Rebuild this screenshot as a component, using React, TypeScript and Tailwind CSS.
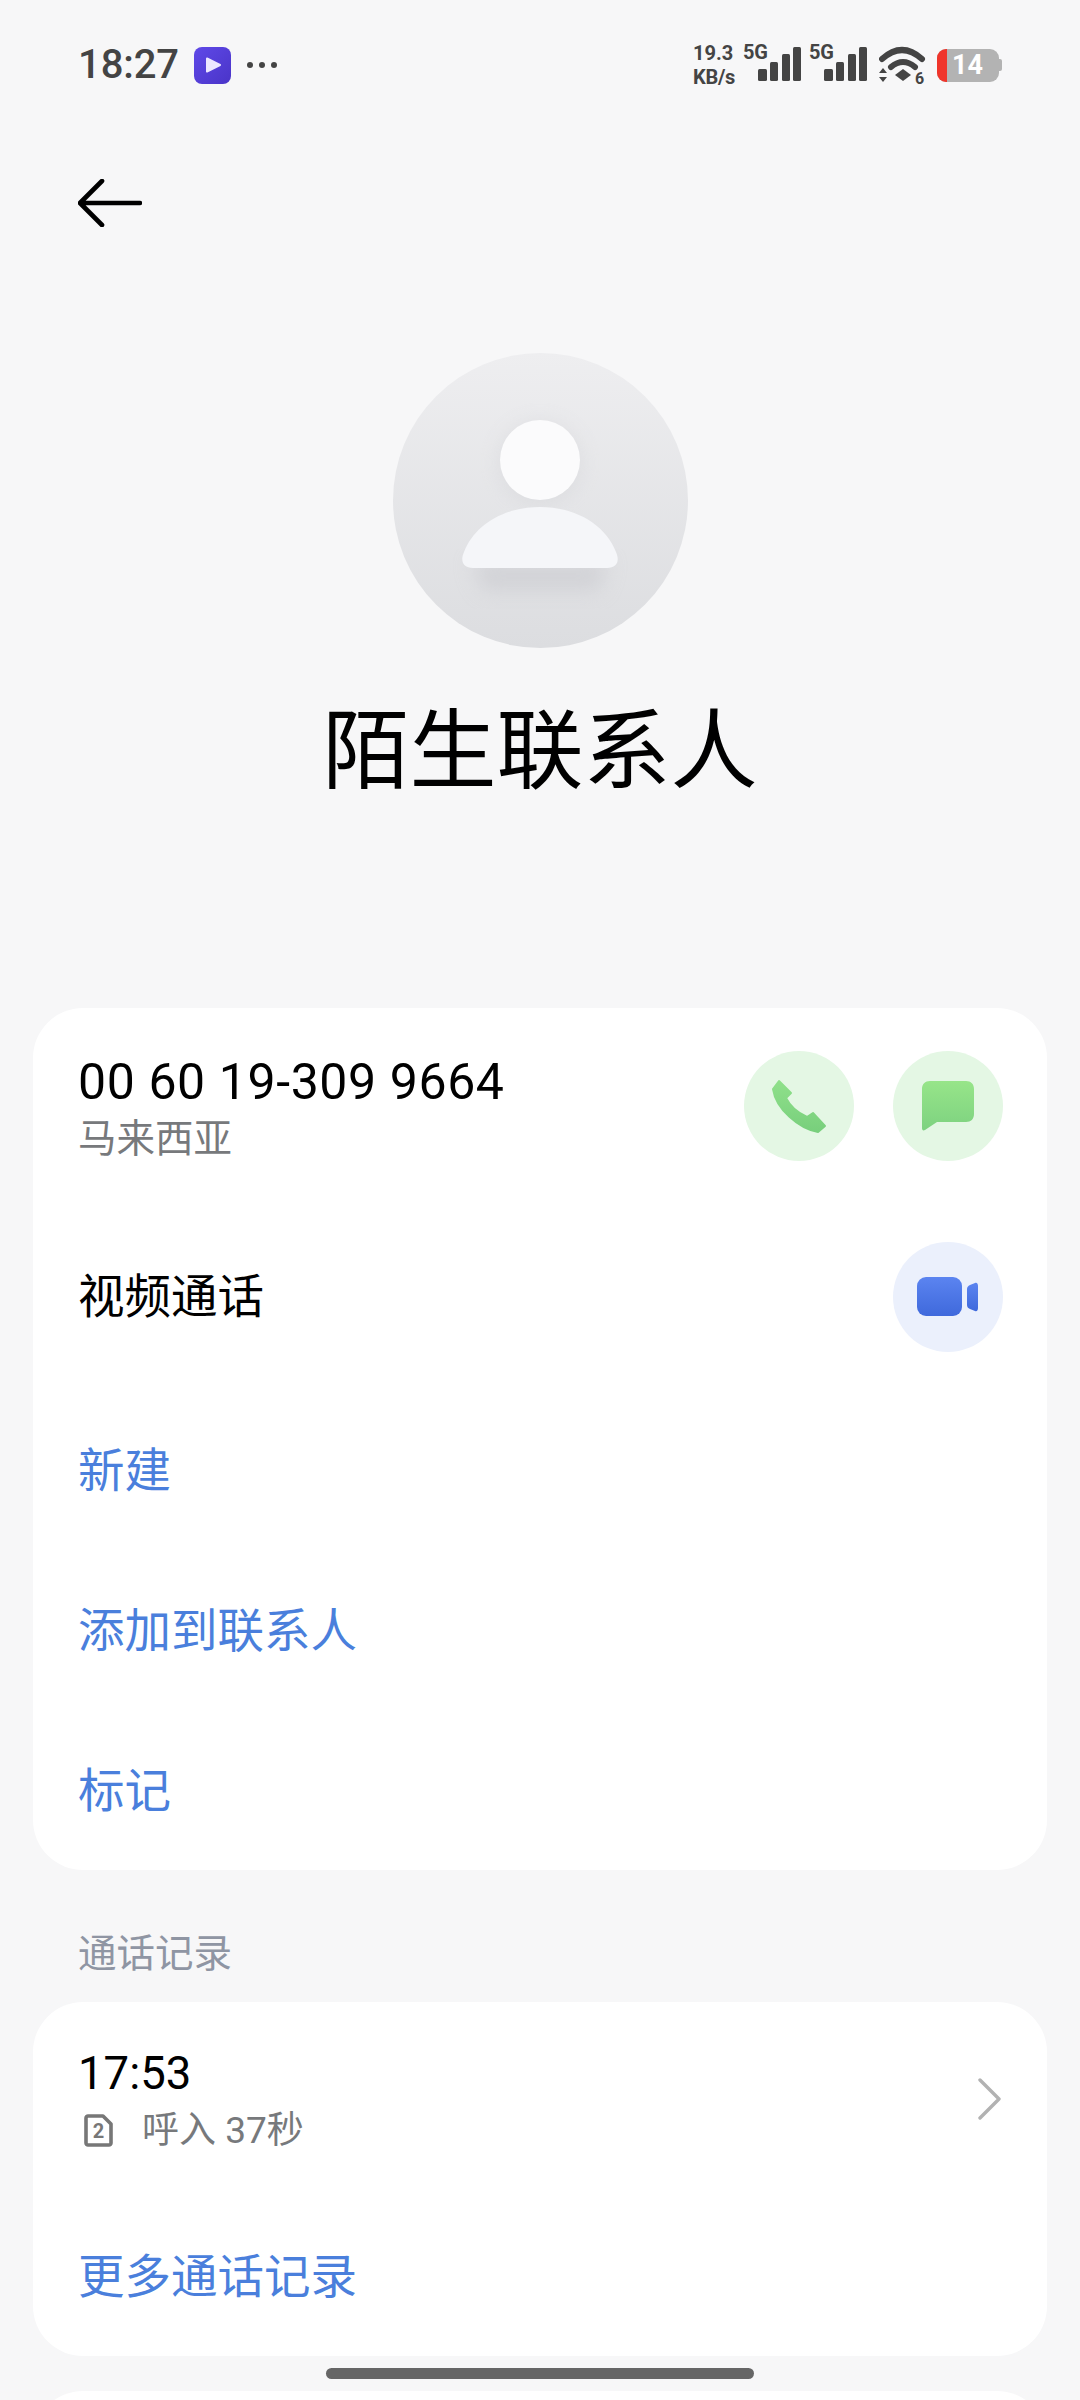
import React from "react";

const cjk = "font-['Roboto','Noto_Sans_CJK_SC',sans-serif]";

function Signal() {
  return (
    <div className="relative w-[58px] h-[36px]">
      <span className="absolute left-0 top-[-4px] text-[20px] leading-[18px] font-bold text-[#444] tracking-[-0.2px]">5G</span>
      <svg className="absolute left-[15px] top-0" width="43" height="36" viewBox="0 0 43 36" fill="#444">
        <rect x="0" y="22" width="9" height="12" rx="1.5" />
        <rect x="12" y="15" width="8" height="19" rx="1.5" />
        <rect x="24" y="7" width="8" height="27" rx="1.5" />
        <rect x="35" y="0" width="8" height="34" rx="1.5" />
      </svg>
    </div>
  );
}

function StatusBar() {
  return (
    <div className="h-[130px] flex items-center justify-between pl-[78px] pr-[78px]">
      <div className="flex items-center">
        <span className="text-[40px] font-medium text-[#444] leading-none tracking-[-0.1px]">18:27</span>
        <div className="ml-[15px] w-[37px] h-[37px] rounded-[8px] bg-gradient-to-br from-[#5f49e8] to-[#4a34c8] flex items-center justify-center">
          <svg width="20" height="20" viewBox="0 0 20 20"><path d="M4 3.5 L17 10 L4 16.5 Z" fill="#ece7ff" stroke="#ece7ff" strokeWidth="2" strokeLinejoin="round" /></svg>
        </div>
        <div className="ml-[16px] flex items-center gap-[6px]">
          <span className="w-[6px] h-[6px] rounded-full bg-[#444]" />
          <span className="w-[6px] h-[6px] rounded-full bg-[#444]" />
          <span className="w-[6px] h-[6px] rounded-full bg-[#444]" />
        </div>
      </div>
      <div className="flex items-center">
        <div className="w-[44px] mr-[6px] flex flex-col text-[#444] font-bold text-[20px] leading-[24px]">
          <span>19.3</span>
          <span className="tracking-[-0.3px]">KB/s</span>
        </div>
        <Signal />
        <div className="ml-[8px]"><Signal /></div>
        <div className="relative ml-[12px] w-[47px] h-[38px]">
          <svg width="47" height="38" viewBox="0 0 47 38" fill="none">
            <path d="M3 13 Q23 -5 43 13" stroke="#444" strokeWidth="6" strokeLinecap="round" />
            <path d="M12 21 Q24 11 36 21" stroke="#444" strokeWidth="6" strokeLinecap="round" />
            <path d="M16 29 L24 23 L32 29 L24 35 Z" fill="#444" />
            <path d="M0 27 L4 22 L8 27 Z M0 31 L8 31 L4 36 Z" fill="#444" />
          </svg>
          <span className="absolute left-[36px] top-[26px] text-[16px] leading-[14px] font-bold text-[#444]">6</span>
        </div>
        <div className="ml-[11px] flex items-center">
          <div className="w-[62px] h-[33px] rounded-[9px] bg-[#b3b3b3] flex items-center">
            <div className="w-[10px] h-full rounded-l-[9px] bg-[#f0352b]" />
            <span className="ml-[5px] text-white font-bold text-[27px] leading-none">14</span>
          </div>
          <div className="w-[3px] h-[12px] rounded-r-[2px] bg-[#b3b3b3]" />
        </div>
      </div>
    </div>
  );
}

function Avatar() {
  return (
    <div className="mt-[77px] mx-auto w-[295px] h-[295px] rounded-full bg-gradient-to-b from-[#eeeef0] to-[#dcdde0]">
      <svg width="295" height="295" viewBox="0 0 295 295">
        <defs>
          <filter id="sh" x="-30%" y="-40%" width="160%" height="200%">
            <feGaussianBlur stdDeviation="10" />
          </filter>
        </defs>
        <path d="M78 208 L216 208 L206 238 L90 238 Z" fill="#c4c5ca" opacity="0.5" filter="url(#sh)" />
        <circle cx="147" cy="110" r="42" fill="#d2d3d7" opacity="0.45" filter="url(#sh)" />
        <circle cx="147" cy="107" r="40" fill="#fbfbfc" />
        <path d="M71 199 C82 171 112 154 147 154 C182 154 212 171 223 199 C227 208 224 215 214 215 L80 215 C70 215 67 208 71 199 Z" fill="#f5f6f9" />
      </svg>
    </div>
  );
}

function Circle({ tone, mr, children }: { tone: string; mr?: boolean; children: React.ReactNode }) {
  return (
    <div className={`${tone} ${mr ? "mr-[39px]" : ""} w-[110px] h-[110px] rounded-full flex items-center justify-center`}>
      {children}
    </div>
  );
}

function LinkRow({ label }: { label: string }) {
  return (
    <div className="h-[160px] pt-[2px] flex items-center text-[46.5px] leading-none text-[#4a7fdc]">{label}</div>
  );
}

export default function App() {
  return (
    <div className={`${cjk} relative w-[1080px] h-[2400px] overflow-hidden bg-[#f7f7f8]`}>
      <StatusBar />
      <div className="h-[146px] pl-[78px] flex items-center">
        <svg width="64" height="48" viewBox="0 0 64 48" fill="none" stroke="#000" strokeWidth="4.6" strokeLinecap="round" strokeLinejoin="round">
          <path d="M62 24 L2 24 M24 2 L2 24 L24 46" />
        </svg>
      </div>
      <Avatar />
      <div className="mt-[52px] h-[104px] flex items-center justify-center text-[87px] leading-none text-black">陌生联系人</div>

      <div className="mt-[204px] mx-[33px] h-[862px] rounded-[50px] bg-white pl-[45px] pr-[44px]">
        <div className="h-[196px] flex items-center justify-between">
          <div className="flex flex-col pt-[6px]">
            <span className="text-[50px] leading-[56px] text-black tracking-[0.6px]">00 60 19-309 9664</span>
            <span className="mt-[4px] text-[38.5px] leading-[50px] text-[#77797c]">马来西亚</span>
          </div>
          <div className="flex">
            <Circle tone="bg-[#e4f7e4]" mr>
              <svg width="110" height="110" viewBox="0 0 110 110">
                <defs>
                  <linearGradient id="pg" x1="0" y1="0" x2="0" y2="1"><stop offset="0" stopColor="#8fe08a" /><stop offset="1" stopColor="#78cf7c" /></linearGradient>
                </defs>
                <path d="M35 30 L47 42 L42 47 C46 55 54 62 63 66 L69 62 L81 75 L74 81 C55 78 32 58 29 38 Z" fill="url(#pg)" stroke="url(#pg)" strokeWidth="2" strokeLinejoin="round" />
              </svg>
            </Circle>
            <Circle tone="bg-[#e4f7e4]">
              <svg width="110" height="110" viewBox="0 0 110 110">
                <defs>
                  <linearGradient id="mg" x1="0" y1="0" x2="0" y2="1"><stop offset="0" stopColor="#97e589" /><stop offset="1" stopColor="#7dd280" /></linearGradient>
                </defs>
                <path d="M37 30 L73 30 C78 30 81 33 81 38 L81 63 C81 68 78 71 73 71 L44 71 L32 79 C30 80 29 79 29 77 L29 38 C29 33 32 30 37 30 Z" fill="url(#mg)" />
              </svg>
            </Circle>
          </div>
        </div>
        <div className="h-[186px] flex items-center justify-between">
          <span className="text-[46.5px] leading-none text-black">视频通话</span>
          <Circle tone="bg-[#ebf0fc]">
            <svg width="110" height="110" viewBox="0 0 110 110">
              <defs>
                <linearGradient id="vg" x1="0" y1="0" x2="0" y2="1"><stop offset="0" stopColor="#5b84f0" /><stop offset="1" stopColor="#3f69dc" /></linearGradient>
              </defs>
              <rect x="24" y="35" width="45" height="39" rx="9" fill="url(#vg)" />
              <path d="M74 47 C74 45 75 44 77 43 L82 41 C84 40 85 42 85 44 L85 66 C85 68 84 70 82 69 L77 67 C75 66 74 65 74 63 Z" fill="url(#vg)" />
            </svg>
          </Circle>
        </div>
        <LinkRow label="新建" />
        <LinkRow label="添加到联系人" />
        <LinkRow label="标记" />
      </div>

      <div className="h-[132px] pl-[78px] pb-[23px] flex items-end text-[38.5px] leading-[50px] text-[#8f95a3]">通话记录</div>

      <div className="mx-[33px] h-[354px] rounded-[50px] bg-white px-[45px]">
        <div className="h-[194px] flex items-center justify-between">
          <div className="flex flex-col pt-[3px]">
            <span className="text-[45.5px] leading-[56px] text-black">17:53</span>
            <div className="flex items-center mt-[4px] h-[50px]">
              <div className="relative w-[29px] h-[33px] ml-[6px] mr-[29px]">
                <svg className="absolute inset-0" width="29" height="33" viewBox="0 0 29 33" fill="none">
                  <path d="M4 2 L19 2 L27 10 L27 29 C27 30 26 31 25 31 L4 31 C3 31 2 30 2 29 L2 4 C2 3 3 2 4 2 Z" stroke="#777" strokeWidth="3.6" strokeLinejoin="round" />
                </svg>
                <span className="absolute inset-0 flex items-center justify-center text-[20px] font-bold leading-none text-[#777]">2</span>
              </div>
              <span className="text-[37px] leading-none text-[#77797c]">呼入 37秒</span>
            </div>
          </div>
          <svg width="24" height="42" viewBox="0 0 24 42" fill="none" stroke="#b2b2b2" strokeWidth="3.4" strokeLinecap="round" strokeLinejoin="round">
            <path d="M2 2 L21 21 L2 40" />
          </svg>
        </div>
        <div className="h-[160px] pt-[2px] flex items-center text-[46.5px] leading-none text-[#4a7fdc]">更多通话记录</div>
      </div>

      <div className="mt-[35px] mx-[33px] h-[100px] rounded-t-[50px] bg-white" />

      <div className="absolute left-[326px] top-[2368px] w-[428px] h-[11px] rounded-full bg-[#666]" />
    </div>
  );
}
